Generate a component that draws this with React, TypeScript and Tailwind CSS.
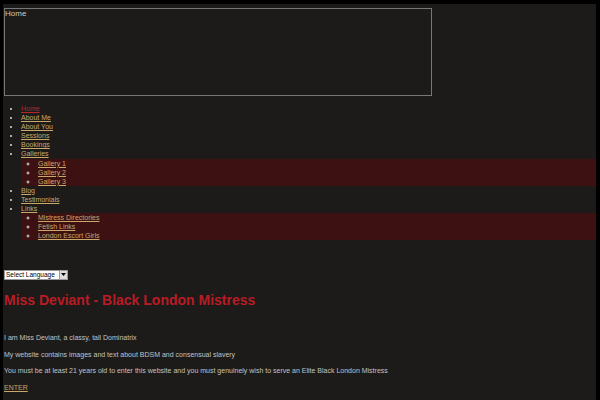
const navLink = "text-[#c9a86a] underline";

const subBox = "bg-[#3d1011] pl-[17px] list-[circle] marker:text-[#9a5a5a]";

export default function App() {
  return (
    <div
      className="min-h-screen bg-black pt-[4px] pl-[3px] pr-[4px]"
      style={{ fontFamily: '"Liberation Sans", Arial, sans-serif' }}
    >
      <div className="bg-[#1c1b1a] min-h-[396px] pt-[4px] pb-[10px]">
        <div className="ml-[1px] w-[428px] h-[88px] border border-[#777] text-[8px] leading-[10px] text-[#d0c8b4]">
          Home
        </div>

        <ul className="mt-[8px] pl-[18px] list-disc marker:text-[#ddd] text-[7px] leading-[9.1px]">
          <li><a className="text-[#b3262b] underline">Home</a></li>
          <li><a className={navLink}>About Me</a></li>
          <li><a className={navLink}>About You</a></li>
          <li><a className={navLink}>Sessions</a></li>
          <li><a className={navLink}>Bookings</a></li>
          <li>
            <a className={navLink}>Galleries</a>
            <ul className={subBox}>
              <li><a className={navLink}>Gallery 1</a></li>
              <li><a className={navLink}>Gallery 2</a></li>
              <li><a className={navLink}>Gallery 3</a></li>
            </ul>
          </li>
          <li><a className={navLink}>Blog</a></li>
          <li><a className={navLink}>Testimonials</a></li>
          <li>
            <a className={navLink}>Links</a>
            <ul className={subBox}>
              <li><a className={navLink}>Mistress Directories</a></li>
              <li><a className={navLink}>Fetish Links</a></li>
              <li><a className={navLink}>London Escort Girls</a></li>
            </ul>
          </li>
        </ul>

        <div className="mt-[30px] ml-[1px] flex items-center w-[64px] h-[10px] bg-white border border-[#999]">
          <span className="flex-1 text-[6.5px] leading-[8px] text-black pl-[1px]">Select Language</span>
          <span className="w-[8px] h-[8px] bg-[#ddd] border-l border-[#999] flex items-center justify-center">
            <svg width="5" height="4" viewBox="0 0 5 4"><path d="M0 0 L5 0 L2.5 3 Z" fill="#000" /></svg>
          </span>
        </div>

        <h1 className="mt-[11px] ml-[1px] text-[14px] leading-[18px] font-bold text-[#b81c24]">
          Miss Deviant - Black London Mistress
        </h1>

        <div className="mt-[24px] ml-[1px] text-[7px] leading-[9px] text-[#c2c2c2] flex flex-col gap-[7.5px]">
          <p>I am Miss Deviant, a classy, tall Dominatrix</p>
          <p>My website contains images and text about BDSM and consensual slavery</p>
          <p>You must be at least 21 years old to enter this website and you must genuinely wish to serve an Elite Black London Mistress</p>
          <p><a className="text-[#c9a86a] underline">ENTER</a></p>
        </div>
      </div>
    </div>
  );
}
